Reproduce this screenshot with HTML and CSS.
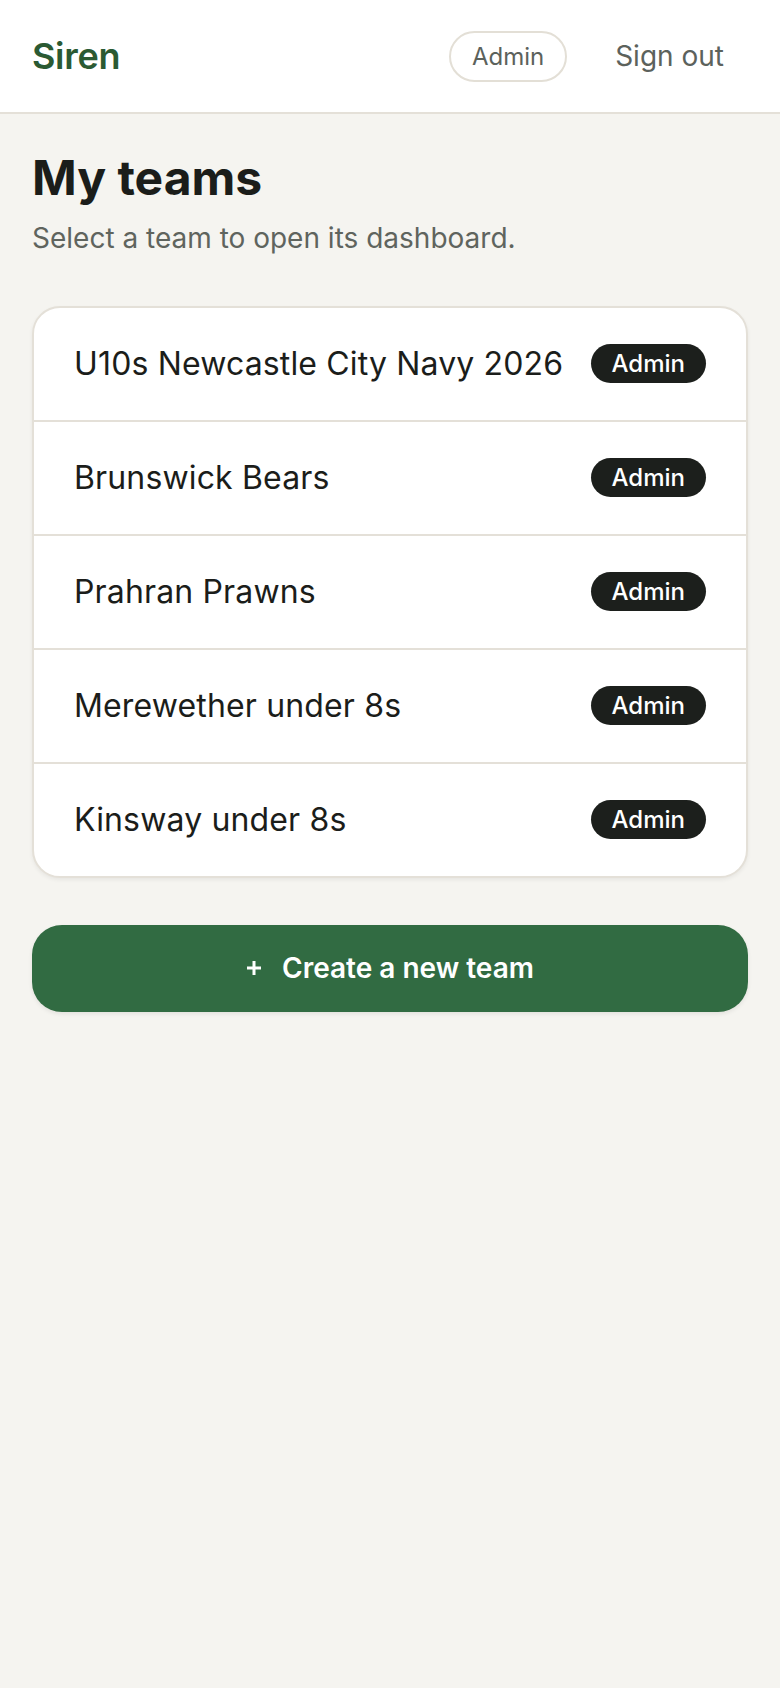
FILE: index.html
```html
<!DOCTYPE html>
<html lang="en">
<head>
    <meta charset="UTF-8">
    <meta name="viewport" content="width=device-width, initial-scale=1.0">
    <title>Siren - My teams</title>
    <link rel="stylesheet" href="styles.css">
</head>
<body>
    <header class="topbar">
        <a class="logo" href="#">Siren</a>
        <nav class="topbar-actions">
            <a class="pill-link" href="#">Admin</a>
            <a class="signout" href="#">Sign out</a>
        </nav>
    </header>

    <main class="page">
        <h1 class="page-title">My teams</h1>
        <p class="page-sub">Select a team to open its dashboard.</p>

        <ul class="team-list">
            <li class="team-row">
                <span class="team-name">U10s Newcastle City Navy 2026</span>
                <span class="badge">Admin</span>
            </li>
            <li class="team-row">
                <span class="team-name">Brunswick Bears</span>
                <span class="badge">Admin</span>
            </li>
            <li class="team-row">
                <span class="team-name">Prahran Prawns</span>
                <span class="badge">Admin</span>
            </li>
            <li class="team-row">
                <span class="team-name">Merewether under 8s</span>
                <span class="badge">Admin</span>
            </li>
            <li class="team-row">
                <span class="team-name">Kinsway under 8s</span>
                <span class="badge">Admin</span>
            </li>
        </ul>

        <button class="create-btn" type="button">
            <svg class="plus" width="16" height="16" viewBox="0 0 16 16" aria-hidden="true">
                <path d="M8 1v14M1 8h14" stroke="currentColor" stroke-width="3" fill="none"/>
            </svg>
            <span>Create a new team</span>
        </button>
    </main>
</body>
</html>
```

FILE: styles.css
```css
* {
    box-sizing: border-box;
}

body {
    margin: 0;
    font-family: Inter, "Noto Sans", sans-serif;
    background-color: #f5f4f0;
    color: #1b1d1a;
}

a {
    text-decoration: none;
}

/* header */
.topbar {
    height: 114px;
    display: flex;
    align-items: center;
    justify-content: space-between;
    padding: 0 32px;
    background-color: #fff;
    border-bottom: 2px solid #e4e0d8;
}

.logo {
    font-size: 36px;
    font-weight: 600;
    color: #2b5a33;
    letter-spacing: -0.3px;
}

.topbar-actions {
    display: flex;
    align-items: center;
    gap: 24px;
}

.pill-link {
    font-size: 24px;
    line-height: 29px;
    padding: 9px 21px;
    border: 2px solid #e3dfd6;
    border-radius: 999px;
    color: #5c625c;
}

.signout {
    font-size: 28px;
    line-height: 34px;
    padding: 8px 24px;
    color: #5c625c;
}

/* content */
.page {
    padding: 35px 32px 32px;
}

.page-title {
    margin: 0;
    font-size: 48px;
    line-height: 1.2;
    font-weight: 700;
}

.page-sub {
    margin: 12px 0 0;
    font-size: 28px;
    line-height: 39px;
    color: #5f645e;
}

.team-list {
    list-style: none;
    margin: 48px 0 0;
    padding: 0;
    background-color: #fff;
    border: 2px solid #e4e0d8;
    border-radius: 28px;
    overflow: hidden;
    box-shadow: 0 2px 4px rgba(0, 0, 0, 0.06);
}

.team-row {
    box-sizing: content-box;
    display: flex;
    align-items: center;
    justify-content: space-between;
    gap: 16px;
    height: 112px;
    padding: 0 40px;
}

.team-row + .team-row {
    border-top: 2px solid #e4e0d8;
}

.team-name {
    font-size: 32px;
    line-height: 48px;
    letter-spacing: 0.15px;
}

.badge {
    flex-shrink: 0;
    font-size: 24px;
    font-weight: 500;
    line-height: 29px;
    padding: 5px 21px;
    border-radius: 999px;
    background-color: #1c1f1c;
    color: #fff;
}

.create-btn {
    display: flex;
    align-items: center;
    justify-content: center;
    gap: 20px;
    width: 100%;
    height: 87px;
    margin-top: 47px;
    border: 0;
    border-radius: 30px;
    background-color: #316b42;
    color: #fff;
    font-family: inherit;
    font-size: 28px;
    font-weight: 600;
    box-shadow: 0 2px 4px rgba(0, 0, 0, 0.08);
}

.plus {
    display: block;
}
```
